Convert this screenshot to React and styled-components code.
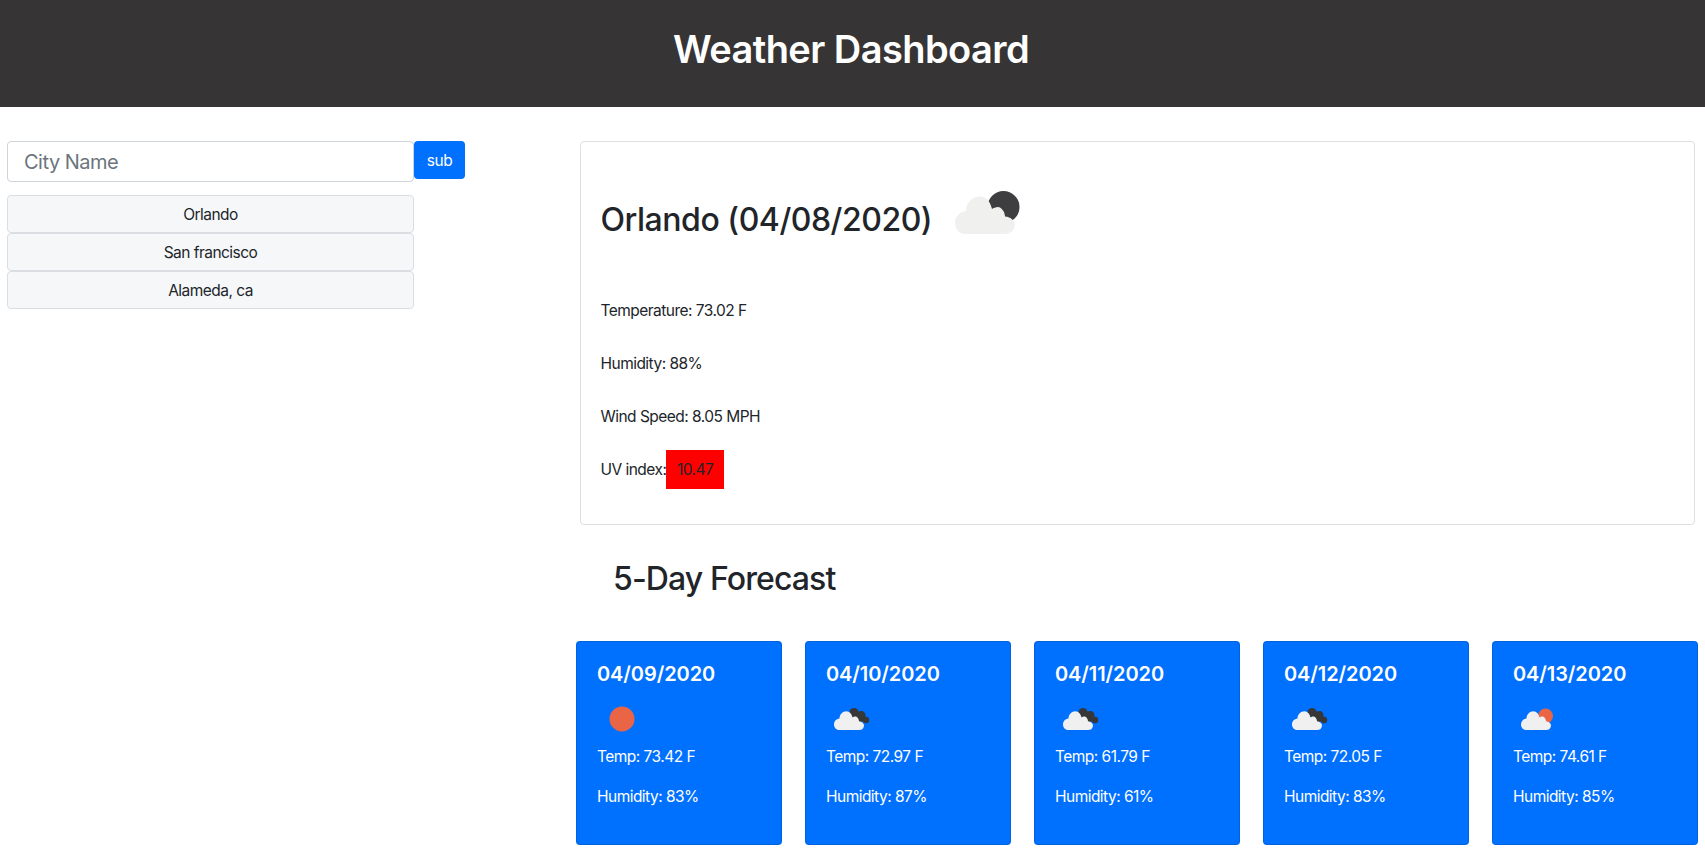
import React from 'react';
import styled, { createGlobalStyle } from 'styled-components';

const GlobalStyle = createGlobalStyle`
  html, body {
    margin: 0;
    padding: 0;
    background: #fff;
    color: #212529;
    font-family: Inter, "Liberation Sans", sans-serif;
    font-size: 15.5px;
    line-height: 24px;
    letter-spacing: -0.034em;
    overflow: hidden;
  }
  * {
    box-sizing: border-box;
  }
`;

const Header = styled.header`
  height: 107px;
  background: #373435;
  display: flex;
  align-items: center;
  justify-content: center;
  padding-bottom: 10px;
`;

const Title = styled.h1`
  margin: 0 0 0 -3px;
  color: #fff;
  font-size: 38px;
  line-height: 48px;
  font-weight: 600;
  letter-spacing: -0.015em;
`;

const Content = styled.div`
  display: flex;
  padding: 34px 6px 0 7px;
`;

const Sidebar = styled.aside`
  width: 569px;
  flex: none;
`;

const SearchRow = styled.div`
  display: flex;
  align-items: flex-start;
  margin-bottom: 13px;
`;

const SearchInput = styled.input`
  width: 407px;
  height: 41px;
  padding: 0 16px;
  border: 1px solid #ced4da;
  border-radius: 4px;
  font-family: inherit;
  font-size: 20px;
  letter-spacing: -0.025em;
  color: #495057;

  &::placeholder {
    color: #6c757d;
    opacity: 1;
  }
`;

const SearchButton = styled.button`
  width: 51px;
  height: 38px;
  padding: 0;
  border: 0;
  border-radius: 4px;
  background: #0070ff;
  color: #fff;
  font-family: inherit;
  font-size: 15.5px;
  letter-spacing: inherit;
`;

const CityButton = styled.button`
  display: block;
  width: 407px;
  height: 38px;
  padding: 0;
  border: 1px solid #dadde1;
  border-radius: 4px;
  background: #f6f7f9;
  color: #212529;
  font-family: inherit;
  font-size: 15.5px;
  letter-spacing: inherit;
`;

const Main = styled.main`
  flex: 1;
  min-width: 0;
`;

const CurrentCard = styled.section`
  width: 1115px;
  height: 384px;
  margin-left: 4px;
  padding: 20px 20px 20px 19.5px;
  border: 1px solid rgba(0, 0, 0, 0.125);
  border-radius: 4px;
`;

const CityHeading = styled.h2`
  display: flex;
  align-items: flex-start;
  height: 108px;
  margin: 0 0 29px;
  padding-top: 39px;
  font-size: 32px;
  line-height: 38px;
  font-weight: 500;
  letter-spacing: -0.0145em;
`;

const HeadingIcon = styled.svg`
  width: 65px;
  height: 43px;
  margin: -10px 0 0 23px;
`;

const Stat = styled.p`
  height: 24px;
  margin: 0 0 29px;
`;

const UvBadge = styled.span`
  padding: 10px 10.5px;
  background: #ff0000;
`;

const ForecastTitle = styled.h2`
  margin: 35px 0 43px 37px;
  font-size: 32px;
  line-height: 38px;
  font-weight: 500;
  letter-spacing: -0.028em;
`;

const ForecastGrid = styled.div`
  display: grid;
  grid-template-columns: repeat(5, 206px);
  column-gap: 23px;
`;

const DayCard = styled.article`
  height: 204px;
  padding: 20px;
  border: 1px solid rgba(0, 0, 0, 0.125);
  border-radius: 4px;
  background: #0070ff;
  color: #fff;
`;

const DayDate = styled.h5`
  margin: 0 0 8px;
  font-size: 20px;
  line-height: 24px;
  font-weight: 600;
  letter-spacing: -0.004em;
`;

const DayIcon = styled.svg`
  display: block;
  width: 50px;
  height: 50px;
  margin-bottom: 1px;
`;

const DayStat = styled.p`
  margin: 0 0 16px;
`;

const cloudPath =
  'M10 43H50a10 10 0 0 0 10-9c0-4-4-8-10-8.500c0-5-4-9.500-7-9.500c-2 0-5 1-6 2C35 10 31 5.500 25 5.500C17 5.500 11 12 11 20C4 21 0 26 0 32c0 6 4.500 11 10 11z';

const SmallCloud = () => (
  <path d={cloudPath} fill="#f0f0f0" transform="translate(8 14.500) scale(0.5)" />
);

const ForecastIcon = ({ kind }) => {
  if (kind === 'sun') {
    return (
      <DayIcon viewBox="0 0 50 50">
        <circle cx="25" cy="25" r="12.500" fill="#ea6546" />
      </DayIcon>
    );
  }
  if (kind === 'sunCloud') {
    return (
      <DayIcon viewBox="0 0 50 50">
        <circle cx="32.500" cy="22" r="7.500" fill="#ea6546" />
        <SmallCloud />
      </DayIcon>
    );
  }
  return (
    <DayIcon viewBox="0 0 50 50">
      <circle cx="28" cy="18.500" r="4.500" fill="#373737" />
      <circle cx="35.500" cy="21.500" r="4" fill="#373737" />
      <circle cx="40" cy="26" r="3.200" fill="#373737" />
      <path d="M26 18l11-1 3 9-8 3z" fill="#373737" />
      <SmallCloud />
    </DayIcon>
  );
};

const days = [
  { date: '04/09/2020', temp: '73.42', humidity: 83, icon: 'sun' },
  { date: '04/10/2020', temp: '72.97', humidity: 87, icon: 'cloud' },
  { date: '04/11/2020', temp: '61.79', humidity: 61, icon: 'cloud' },
  { date: '04/12/2020', temp: '72.05', humidity: 83, icon: 'cloud' },
  { date: '04/13/2020', temp: '74.61', humidity: 85, icon: 'sunCloud' },
];

const cities = ['Orlando', 'San francisco', 'Alameda, ca'];

const App = () => {
  return (
    <>
      <GlobalStyle />
      <Header>
        <Title>Weather Dashboard</Title>
      </Header>
      <Content>
        <Sidebar>
          <SearchRow>
            <SearchInput placeholder="City Name" />
            <SearchButton>sub</SearchButton>
          </SearchRow>
          {cities.map((city) => (
            <CityButton key={city}>{city}</CityButton>
          ))}
        </Sidebar>
        <Main>
          <CurrentCard>
            <CityHeading>
              Orlando (04/08/2020)
              <HeadingIcon viewBox="0 0 65 43">
                <circle cx="48.500" cy="16" r="16" fill="#3e3e40" />
                <path d={cloudPath} fill="#f0f0ef" />
              </HeadingIcon>
            </CityHeading>
            <Stat>Temperature: 73.02 F</Stat>
            <Stat>Humidity: 88%</Stat>
            <Stat>Wind Speed: 8.05 MPH</Stat>
            <Stat>
              UV index:<UvBadge>10.47</UvBadge>
            </Stat>
          </CurrentCard>
          <ForecastTitle>5-Day Forecast</ForecastTitle>
          <ForecastGrid>
            {days.map((day) => (
              <DayCard key={day.date}>
                <DayDate>{day.date}</DayDate>
                <ForecastIcon kind={day.icon} />
                <DayStat>Temp: {day.temp} F</DayStat>
                <DayStat>Humidity: {day.humidity}%</DayStat>
              </DayCard>
            ))}
          </ForecastGrid>
        </Main>
      </Content>
    </>
  );
};

export default App;
